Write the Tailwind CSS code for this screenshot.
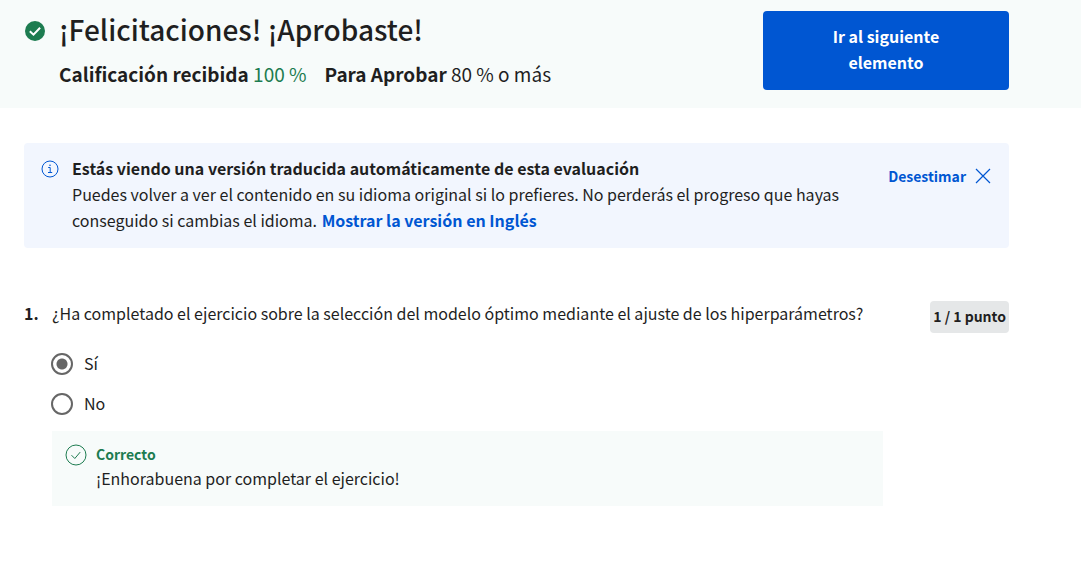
<!DOCTYPE html>
<html lang="es">
<head>
<meta charset="utf-8">
<meta name="viewport" content="width=device-width, initial-scale=1">
<title>Evaluación</title>
<script src="https://cdn.jsdelivr.net/npm/@tailwindcss/browser@4"></script>
</head>
<body class="bg-white font-['Noto_Sans_CJK_SC',sans-serif] text-base leading-[26px] text-[#1f1f1f]">
<header class="flex items-start justify-between gap-6 bg-[#f7fbfa] pt-[11px] pr-[72px] pb-[18px] pl-6">
  <div class="flex gap-[13px]">
    <svg class="mt-[9px] h-[22px] w-[22px] shrink-0" viewBox="0 0 22 22" aria-hidden="true">
      <circle cx="11" cy="11" r="10" fill="#1d7c50"/>
      <path d="M5.8 11.2l3.7 3.5 6.6-7" fill="none" stroke="#fff" stroke-width="2"/>
    </svg>
    <div>
      <h1 class="text-[28px] leading-9 font-medium">¡Felicitaciones! ¡Aprobaste!</h1>
      <p class="mt-[11px] flex flex-wrap gap-x-[18px] text-[19px] leading-8">
        <span><b class="font-bold">Calificación recibida</b> <span class="text-[#1d7c50]">100 %</span></span>
        <span><b class="font-bold">Para Aprobar</b> 80 % o más</span>
      </p>
    </div>
  </div>
  <button type="button" class="w-[246px] shrink-0 rounded bg-[#0056d2] px-16 pt-3 pb-[15px] font-bold text-white">Ir al siguiente elemento</button>
</header>

<main class="pt-[35px] pr-[72px] pb-[60px] pl-6">
  <section class="flex items-start justify-between rounded bg-[#f2f6fe] pt-3 pr-[18px] pb-[15px] pl-4">
    <div class="flex gap-3">
      <svg class="mt-1 h-5 w-5 shrink-0" viewBox="0 0 20 20" fill="none" stroke="#0056d2" aria-hidden="true">
        <circle cx="10" cy="10" r="8"/>
        <path d="M8.2 8.5H10.2V13.5M8 13.5H12.2"/>
        <circle cx="10" cy="6.2" r=".8" fill="#0056d2" stroke="none"/>
      </svg>
      <div class="max-w-[780px]">
        <h2 class="font-bold">Estás viendo una versión traducida automáticamente de esta evaluación</h2>
        <p>Puedes volver a ver el contenido en su idioma original si lo prefieres. No perderás el progreso que hayas conseguido si cambias el idioma. <a href="#" class="ml-px font-bold text-[#0056d2]">Mostrar la versión en Inglés</a></p>
      </div>
    </div>
    <button type="button" class="mt-2 flex shrink-0 items-center gap-[9px] text-sm leading-[26px] font-bold text-[#0056d2]">Desestimar
      <svg class="h-4 w-4" viewBox="0 0 16 16" fill="none" stroke="#0056d2" stroke-width="1.2" aria-hidden="true"><path d="M1 1L15 15M15 1L1 15"/></svg>
    </button>
  </section>

  <section class="mt-[52px] flex items-start">
    <div class="w-7 shrink-0 font-bold">1.</div>
    <fieldset class="min-w-0 grow">
      <legend class="mb-[18px]">¿Ha completado el ejercicio sobre la selección del modelo óptimo mediante el ajuste de los hiperparámetros?</legend>
      <div class="flex h-10 items-center gap-[11px]">
        <input id="si" type="radio" name="respuesta" checked class="-ml-px h-[22px] w-[22px] appearance-none rounded-full border-2 border-[#666] checked:bg-[radial-gradient(circle,#666_5px,transparent_6px)]">
        <label for="si" class="pb-0.5">Sí</label>
      </div>
      <div class="flex h-10 items-center gap-[11px]">
        <input id="no" type="radio" name="respuesta" class="-ml-px h-[22px] w-[22px] appearance-none rounded-full border-2 border-[#666] checked:bg-[radial-gradient(circle,#666_5px,transparent_6px)]">
        <label for="no" class="pb-0.5">No</label>
      </div>
      <div class="mt-[7px] flex gap-2 bg-[#f7fbfa] pt-[11px] pr-3 pb-[15px] pl-3">
        <svg class="mt-px h-6 w-6 shrink-0" viewBox="0 0 24 24" fill="none" stroke="#1d7c50" aria-hidden="true">
          <circle cx="12" cy="12" r="10"/>
          <path d="M7.5 12.2l3.3 3.3 5.4-6.4"/>
        </svg>
        <div>
          <p class="text-sm leading-6 font-bold text-[#1d7c50]">Correcto</p>
          <p class="leading-[25px]">¡Enhorabuena por completar el ejercicio!</p>
        </div>
      </div>
    </fieldset>
    <div class="mt-px ml-[47px] shrink-0 rounded bg-[#e5e7e8] px-[3px] pb-px text-sm leading-[31px] font-bold">1 / 1 punto</div>
  </section>
</main>
</body>
</html>
